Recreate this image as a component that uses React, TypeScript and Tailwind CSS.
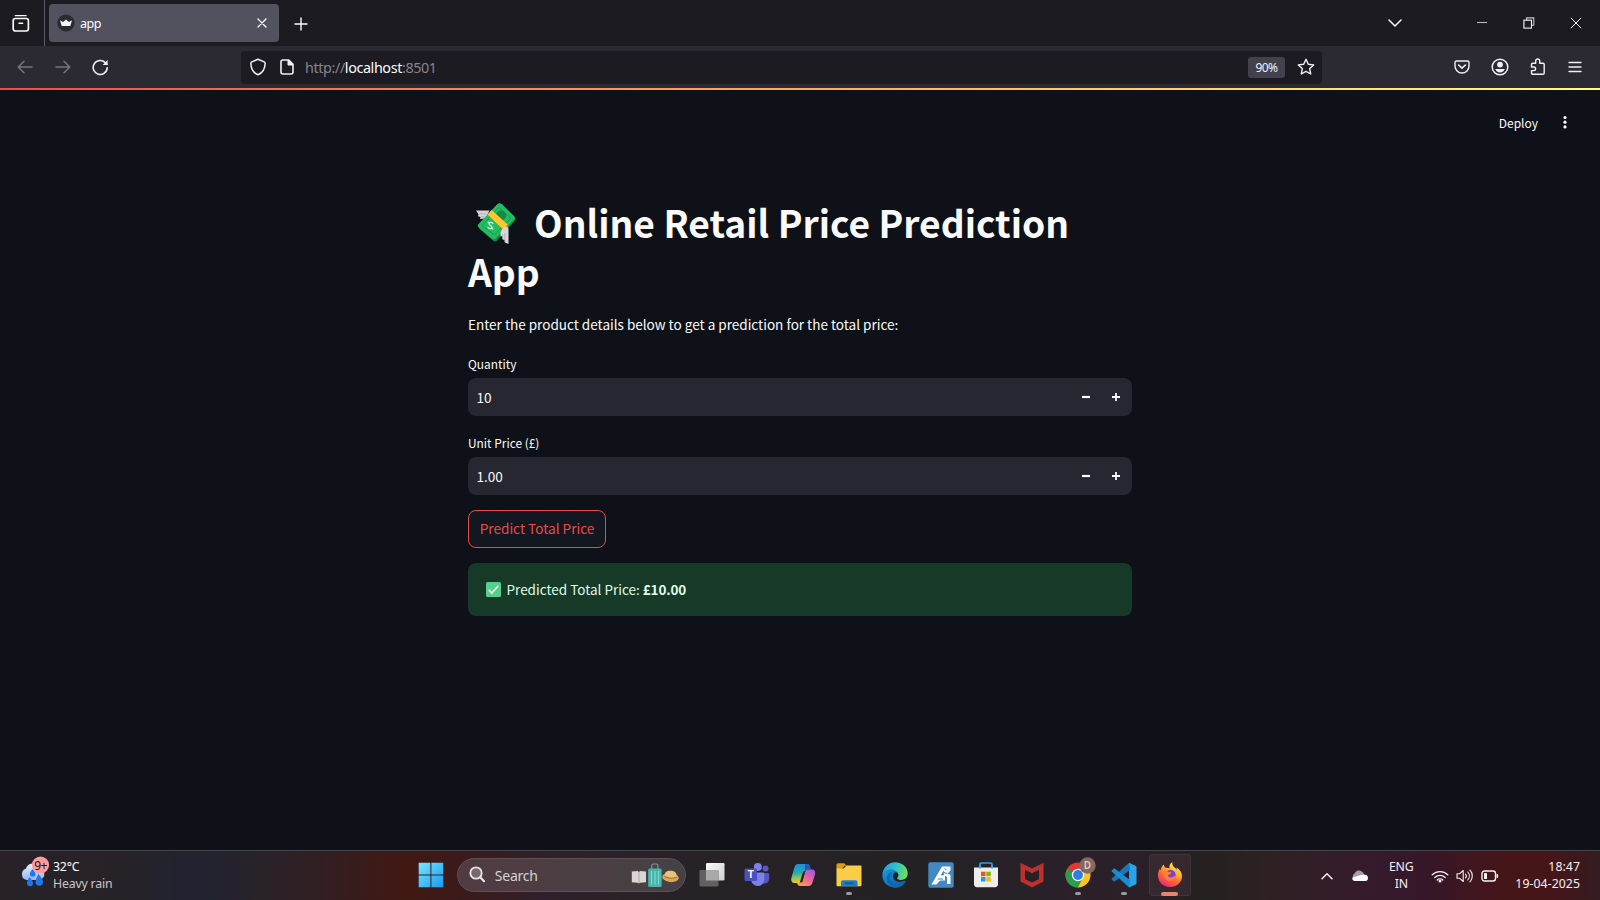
import React from "react";

type IconProps = { className?: string; children: React.ReactNode; w: number; h: number };

function Svg({ className, children, w, h }: IconProps) {
  return (
    <svg width={w} height={h} viewBox={`0 0 ${w} ${h}`} fill="none" className={`block shrink-0 ${className ?? ""}`}>
      {children}
    </svg>
  );
}

const line = { stroke: "currentColor", strokeWidth: 1.5, strokeLinecap: "round" as const, strokeLinejoin: "round" as const };

function TabBar() {
  return (
    <div className="flex h-[46px] items-start bg-[#1c1b22] text-[#fbfbfe]">
      <div className="flex h-[46px] w-[45px] items-center border-r border-[#5b5b66] pl-3">
        <Svg w={18} h={18}>
          <path d="M3.3 1.7h10.8" {...line} strokeWidth={1.3} />
          <rect x="1.2" y="4.5" width="15.2" height="12.5" rx="2.2" {...line} strokeWidth={1.7} />
          <path d="M7 9.2h3.6" {...line} />
        </Svg>
      </div>
      <div className="mt-1 ml-1 flex h-[38px] w-[230px] items-center rounded bg-[#52525e] pl-2 pr-3">
        <Svg w={18} h={18}>
          <circle cx="9" cy="9" r="8.6" fill="#2a2a33" />
          <path d="M3 6.3l3 1.7L9 5.4 12 8l3-1.7-1.7 5.7H4.7z" fill="#f4f4f4" />
        </Svg>
        <span className="ml-[5px] pt-px font-['Noto_Sans',sans-serif] text-[12.6px] leading-[18px] tracking-[-0.5px]">app</span>
        <Svg w={10} h={10} className="ml-auto">
          <path d="M1 1l8 8M9 1l-8 8" {...line} strokeWidth={1.3} />
        </Svg>
      </div>
      <Svg w={14} h={14} className="mt-[17px] ml-[15px]">
        <path d="M7 1v12M1 7h12" {...line} strokeWidth={1.4} />
      </Svg>
      <div className="ml-auto flex h-[46px] items-center pr-[18px]">
        <Svg w={14} h={8} className="mr-[74px]">
          <path d="M1 1l6 6 6-6" {...line} />
        </Svg>
        <Svg w={12} h={12} className="mr-[35px]">
          <path d="M1 5.5h10" stroke="#b9b9bd" strokeWidth="1.1" />
        </Svg>
        <Svg w={12} h={12} className="mr-[35px]">
          <path d="M3.6 3V.9h7.2v7.3H8.6" stroke="#c4c4c8" strokeWidth="1.1" />
          <rect x=".9" y="3.2" width="7.6" height="7.9" stroke="currentColor" strokeWidth="1.1" />
        </Svg>
        <Svg w={12} h={12}>
          <path d="M.8.8l10.4 10.4M11.2.8L.8 11.2" stroke="currentColor" strokeWidth="1" />
        </Svg>
      </div>
    </div>
  );
}

function Toolbar() {
  return (
    <div className="flex h-[42px] items-center bg-[#2b2a33] text-[#f0f0f4]">
      <Svg w={16} h={14} className="ml-[17px] text-[#76757e]">
        <path d="M15 7H1.5M7 1.2L1.2 7 7 12.8" {...line} />
      </Svg>
      <Svg w={16} h={14} className="ml-[21.5px] text-[#76757e]">
        <path d="M1 7h13.5M9 1.2L14.8 7 9 12.8" {...line} />
      </Svg>
      <Svg w={17} h={17} className="ml-[21.5px]">
        <path d="M15.2 8.7a7 7 0 1 1-2-5.1l1.6 1.7" {...line} strokeWidth={1.6} />
        <path d="M15.6 1v5h-5z" fill="currentColor" />
      </Svg>
      <div className="ml-[132px] flex h-[33px] w-[1081px] items-center rounded bg-[#1c1b22] pr-[7px] pl-[8.5px]">
        <Svg w={16} h={18}>
          <path d="M8 1.2l6.2 2.7c.7.3.9.8.9 1.4 0 5-2.3 9.5-7.1 11.500C3.2 14.8.9 10.3.9 5.3c0-.6.2-1.1.9-1.4z" {...line} />
        </Svg>
        <Svg w={14} h={16} className="ml-[14.5px]">
          <path d="M3 1h5.800L13 5.200V13a2 2 0 0 1-2 2H3a2 2 0 0 1-2-2V3a2 2 0 0 1 2-2z" {...line} strokeWidth={1.6} />
          <path d="M8 1v5h5z" fill="currentColor" stroke="currentColor" />
        </Svg>
        <span className="ml-[11px] pt-[2px] font-['Noto_Sans',sans-serif] text-[14.4px] leading-5 tracking-[-0.41px] text-[#85848c]">
          http://<span className="text-[#fbfbfe]">localhost</span>:8501
        </span>
        <span className="ml-auto flex h-[21px] w-[37px] items-center justify-center rounded-[3px] bg-[#42414d] pt-px font-['Noto_Sans',sans-serif] text-[12px] tracking-[-0.6px] text-[#f0f0f4]">
          90%
        </span>
        <Svg w={18} h={18} className="ml-3">
          <path d="M9 1.300l2.300 4.900 5.400.7-4 3.700 1 5.400L9 13.400 4.300 16l1-5.400-4-3.700 5.400-.7z" {...line} strokeWidth={1.4} />
        </Svg>
      </div>
      <div className="ml-auto flex items-center pr-[18px]">
        <Svg w={16} h={14} className="mr-[21px]">
          <path d="M2.500 1h11c.9 0 1.500.6 1.500 1.500V6A7 7 0 0 1 1 6V2.500C1 1.600 1.600 1 2.500 1z" {...line} strokeWidth={1.4} />
          <path d="M4.600 5L8 8.200 11.400 5" {...line} strokeWidth={1.6} />
        </Svg>
        <Svg w={18} h={18} className="mr-[21px]">
          <circle cx="9" cy="9" r="7.8" {...line} strokeWidth={1.5} />
          <circle cx="9" cy="6.6" r="2.9" fill="currentColor" />
          <path d="M4.300 11h9.400c-.7 2.200-2.400 3.600-4.700 3.600S5 13.200 4.300 11z" fill="currentColor" />
        </Svg>
        <Svg w={16} h={18} className="mr-[22px]">
          <path d="M1.500 6.500c0-.7.5-1.200 1.200-1.200h3V3a2 2 0 0 1 4 0v2.300H13c.7 0 1.200.5 1.200 1.200V15c0 .8-.5 1.300-1.200 1.300H2.700c-.7 0-1.200-.5-1.200-1.200v-2.500h2.300a1.800 1.800 0 0 0 0-3.600H1.500z" {...line} strokeWidth={1.4} />
        </Svg>
        <Svg w={14} h={12}>
          <path d="M1 1.500h12M1 6h12M1 10.500h12" {...line} strokeWidth={1.3} />
        </Svg>
      </div>
    </div>
  );
}

function MoneyWings() {
  return (
    <Svg w={40} h={42} className="mt-[23px] mr-[18px] ml-2">
      <path d="M0 7.500h13.500l-4 8-5.500.5.500-2-2.500-.7.500-2z" fill="#d6d2db" />
      <path d="M3.500 10.500l6 .5M5.500 13.500l3 .3" stroke="#a9a4b0" strokeWidth=".7" />
      <path d="M3 23L22.300 1.300a3 3 0 0 1 4 0L38.500 14a3 3 0 0 1 0 4L21 37.500a3 3 0 0 1-4 0L3.500 26z" fill="#168b46" />
      <path d="M2.800 20.800L21.500 1a3 3 0 0 1 3.800 0L38 13a2.500 2.500 0 0 1 0 3.500L19.500 35.500a3 3 0 0 1-3.800 0L2.800 24.500a2.500 2.500 0 0 1 0-3.700z" fill="#24bd62" />
      <path d="M6 22.800L22.800 4.300l12 10.700-16.300 17z" stroke="#179a4d" strokeWidth="1" />
      <ellipse cx="25" cy="12.500" rx="5.300" ry="5" fill="#168b46" />
      <path d="M11.500 11.500l4.200-4.500 15.800 14.500-4.300 5z" fill="#ffc72e" />
      <path d="M27.200 26.500l4.300-5v4l-3.500 4.500z" fill="#dd9a22" />
      <path d="M17.300 20.700c-1.300-1.600-3.100-1.700-4-.7-1.500 1.800 3.900 3.200 2.500 5-.9 1.100-2.900.7-4.200-.9M11.700 18.800l1.400 1.200M15.800 25l1.400 1.200" stroke="#d3fbe2" strokeWidth="1.200" />
      <path d="M24.500 30.500c.5-3.500 2.500-6 6-7l2 2v15.500l-3.700-1.500v-2.500l-2.300-.5v-3l-2-.5z" fill="#d9d5de" />
      <path d="M28.800 30v9M26.500 31v5" stroke="#aaa5b1" strokeWidth=".7" />
    </Svg>
  );
}

function NumberField({ label, value }: { label: string; value: string }) {
  return (
    <div className="flex flex-col">
      <label className="h-[23px] text-[11.9px] leading-[17px] text-[#fafafa]">{label}</label>
      <div className="flex h-[38px] items-center rounded-lg bg-[#262730] pr-[12px] pl-[8.5px]">
        <span className="grow text-[13.6px] leading-5">{value}</span>
        <Svg w={8} h={8} className="mr-[22px]">
          <path d="M0 4h8" stroke="currentColor" strokeWidth="2.2" />
        </Svg>
        <Svg w={8} h={8}>
          <path d="M0 4h8M4 0v8" stroke="currentColor" strokeWidth="1.8" />
        </Svg>
      </div>
    </div>
  );
}

function StreamlitPage() {
  return (
    <main className="flex h-[762px] flex-col bg-[#0e1117] font-['Noto_Sans_CJK_SC',sans-serif] text-[#fafafa]">
      <div className="h-[2px] shrink-0 bg-linear-to-r from-[#e5504f] to-[#fffd80]" />
      <header className="flex h-[66px] shrink-0 items-center justify-end pr-[33.5px]">
        <span className="text-[12px] leading-5">Deploy</span>
        <Svg w={4} h={14} className="mb-[3px] ml-[24.5px]">
          <circle cx="2" cy="2.5" r="1.6" fill="currentColor" />
          <circle cx="2" cy="7.2" r="1.6" fill="currentColor" />
          <circle cx="2" cy="11.9" r="1.6" fill="currentColor" />
        </Svg>
      </header>
      <section className="ml-[468px] flex w-[664px] flex-col pt-[24px]">
        <h1 className="text-[37.2px] leading-[49.5px] font-bold">
          <span className="flex h-[49px] items-start">
            <MoneyWings />
            <span className="mt-[18px]">Online Retail Price Prediction</span>
          </span>
          <span className="mt-[18px] block">App</span>
        </h1>
        <p className="mt-[15px] text-[13.56px] leading-6 tracking-[-0.01px]">Enter the product details below to get a prediction for the total price:</p>
        <div className="mt-[19px] flex flex-col gap-[18px]">
          <NumberField label="Quantity" value="10" />
          <NumberField label="Unit Price (£)" value="1.00" />
        </div>
        <button className="mt-[15px] h-[38px] w-[138px] rounded-lg border border-[#e84a4c] bg-[#131720] pb-px text-[13.6px] text-[#ed494b]">
          Predict Total Price
        </button>
        <div className="mt-[15px] flex h-[53px] items-center rounded-lg bg-[#173928] pl-[18px] text-[13.5px] text-[#dffde9]">
          <Svg w={15} h={15} className="mr-[5.5px]">
            <rect width="15" height="15" rx="1.5" fill="#55cf89" />
            <path d="M2.800 7.800l3 3.200 6.300-7" stroke="#effff4" strokeWidth="1.6" />
          </Svg>
          <span className="whitespace-pre">Predicted Total Price: <b className="font-bold tracking-[-0.15px]">£10.00</b></span>
        </div>
      </section>
    </main>
  );
}

function Slot({ children, running }: { children: React.ReactNode; running?: boolean }) {
  return (
    <div className="flex h-[49px] w-[45.8px] shrink-0 flex-col items-center pt-[11px]">
      {children}
      {running && <span className="mt-[4px] h-[3px] w-[6px] rounded-full bg-[#9c989c]" />}
    </div>
  );
}

function Weather() {
  return (
    <div className="flex h-[49px] w-[408px] items-start pt-[4px] pl-[20px]">
      <svg width="30" height="34" viewBox="0 0 30 34" className="block shrink-0">
        <defs>
          <linearGradient id="cloud" x1="0" y1="0" x2="0" y2="1">
            <stop stopColor="#e8f1ff" />
            <stop offset="1" stopColor="#8fb6f5" />
          </linearGradient>
        </defs>
        <path d="M6.500 25a6 6 0 0 1-.5-11.500 7 7 0 0 1 13-1 6.500 6.500 0 0 1 1 12.500z" fill="url(#cloud)" />
        <path d="M12.500 14c2 2.500 3 3.500 3 5a2.800 2.800 0 0 1-5.600 0c0-1.500.6-2.500 2.600-5zM9.500 22c2.500 3 3.500 4 3.500 6a3 3 0 0 1-6 .5c0-2 .5-3.500 2.500-6.500zM18.500 19c3 4 4.500 5.500 4.500 8.500a3.800 3.800 0 0 1-7.500 0c0-3 1-4.500 3-8.500z" fill="#2374f0" />
        <circle cx="20.500" cy="10" r="8.6" fill="#ff9a9c" />
        <text x="20.500" y="14.500" textAnchor="middle" fontFamily="Noto Sans, sans-serif" fontSize="12" letterSpacing="-.5" fill="#1d1214">9+</text>
      </svg>
      <div className="ml-[3px] pt-[3px] font-['Noto_Sans',sans-serif] text-[12.3px] leading-[17px] tracking-[-0.18px] text-white">
        <div>32°C</div>
        <div className="text-[#c9c6c9]">Heavy rain</div>
      </div>
    </div>
  );
}

function SearchBox() {
  return (
    <div className="mt-[7px] mr-[3px] ml-[3px] flex h-[34px] w-[229px] shrink-0 items-center rounded-full border border-[#5c5054] bg-linear-to-r from-[#513b42] to-[#454144] pr-[6px] pl-[11px]">
      <Svg w={17} h={17} className="-mt-px">
        <circle cx="7" cy="7" r="5.7" stroke="#e9e6e8" strokeWidth="1.8" fill="#756a70" />
        <path d="M11.500 11.500l3.500 3.700" stroke="#e9e6e8" strokeWidth="2.2" strokeLinecap="round" />
      </Svg>
      <span className="ml-[9px] font-['Noto_Sans',sans-serif] text-[14px] tracking-[-0.25px] text-[#d6d2d5]">Search</span>
      <Svg w={48} h={25} className="ml-auto">
        <path d="M.8 8.500l5.800-.5 1.300 1 1.300-1 5.800.5v10.800l-6 .5-1.200.8-1.200-.8-5.800-.5z" fill="#dad6d4" />
        <path d="M8 9v11" stroke="#a5a09e" strokeWidth=".8" />
        <path d="M20.800 6V2.500c0-.8.5-1.500 1.300-1.500h3.500c.8 0 1.300.7 1.300 1.500V6" stroke="#849496" strokeWidth="1.2" />
        <rect x="17.200" y="5.500" width="13.500" height="18.500" rx="1.5" fill="#46b5aa" />
        <path d="M20.500 8v13.500M24 8v13.500M27.500 8v13.500" stroke="#82d8ce" strokeWidth="1.2" />
        <ellipse cx="39.500" cy="14.500" rx="8.3" ry="4.6" transform="rotate(6 39.500 14.500)" fill="#d9a85a" />
        <path d="M33.500 12.500c.5-4 3-5.200 6.500-4.700 3.500-.3 5.500 2 6 5.500-2 3-10 3-12.500-.8z" fill="#e9c27a" />
        <path d="M33.300 12.500c3.500 2.500 9 2.800 12.800 1v1c-4 2-9 1.700-12.800-.7z" fill="#a8763a" />
      </Svg>
    </div>
  );
}

function AppIcons() {
  return (
    <>
      <Slot>
        <Svg w={26} h={26}>
          <defs>
            <linearGradient id="tv" x1="0" y1="0" x2="1" y2="1">
              <stop stopColor="#fafafa" />
              <stop offset="1" stopColor="#cfcfcf" />
            </linearGradient>
          </defs>
          <rect x="7" y="1" width="18.500" height="17.500" rx="1.2" fill="url(#tv)" />
          <rect x=".5" y="8" width="19" height="16.500" rx="1.2" fill="#626162" />
          <path d="M7 8h12.500v10.500H7z" fill="#a9a9a9" />
        </Svg>
      </Slot>
      <Slot>
        <Svg w={26} h={26}>
          <circle cx="21.500" cy="6.500" r="3" fill="#5659c6" />
          <path d="M17 11h6.500c1 0 1.700.8 1.700 1.800V17a5 5 0 0 1-8.200 3.500z" fill="#5257c2" />
          <circle cx="13.800" cy="5" r="4" fill="#7b83eb" />
          <path d="M8 10.500h11c.8 0 1.300.5 1.300 1.300V17c0 4-3 7-6.500 7S7 21 7 17v-5z" fill="#7b83eb" />
          <rect x=".5" y="6.500" width="12.500" height="12.500" rx="1.2" fill="#4b50bd" />
          <text x="6.800" y="16.300" textAnchor="middle" fontFamily="Liberation Sans, sans-serif" fontWeight="bold" fontSize="10" fill="#fff">T</text>
        </Svg>
      </Slot>
      <Slot>
        <Svg w={26} h={26}>
          <defs>
            <linearGradient id="cpA" x1="0" y1="0" x2=".1" y2="1">
              <stop stopColor="#2387dc" />
              <stop offset=".5" stopColor="#25aeb0" />
              <stop offset=".8" stopColor="#a1c944" />
              <stop offset="1" stopColor="#f5c52d" />
            </linearGradient>
            <linearGradient id="cpB" x1=".7" y1="0" x2=".2" y2="1">
              <stop stopColor="#a65be0" />
              <stop offset=".5" stopColor="#f0629b" />
              <stop offset="1" stopColor="#ff9d50" />
            </linearGradient>
          </defs>
          <path d="M8 2h9c2 0 2.500 1.300 3 3l.8 2.500h-3C16 7.500 15 9 14.500 11l-2 7c-.5 2-1.500 3-3.500 3H5c-3 0-4.500-2-3.500-5.500l2.700-9.500C5 3.500 6 2 8 2z" fill="url(#cpA)" />
          <path d="M19.500 7.500H22c2.500 0 3.800 2 3 5l-2.500 8c-.8 2.500-2 3.500-4 3.500H10c-2 0-2.500-1.500-3-3h2c2 0 3-1 3.500-3l2.200-7c.7-2.500 2-3.500 4.800-3.500z" fill="url(#cpB)" />
          <path d="M15 2h2c2 0 2.500 1.300 3 3l.8 2.500h-3c-1.500 0-2.300.8-3 2.500z" fill="#2458bb" />
          <path d="M15.300 9l-3 11.200h-2.500l3-9.700c.4-1 1.200-1.500 2.500-1.500z" fill="#272125" />
        </Svg>
      </Slot>
      <Slot running>
        <Svg w={26} h={26}>
          <path d="M.5 3c0-1 .7-1.700 1.700-1.700h6l2.500 2.500h-2L6 7H.5z" fill="#dc9d14" />
          <path d="M.5 6.500h7L10.500 3.500h14c.7 0 1 .4 1 1V23c0 .8-.5 1.300-1.300 1.300H1.800c-.8 0-1.300-.5-1.300-1.300z" fill="#fbcd46" />
          <path d="M5 24.300v-4c0-1.200.8-2 2-2h12.500c1.200 0 2 .8 2 2v4z" fill="#1f7dcc" />
          <path d="M9 20.300h8.500v2H9z" fill="#155a9c" />
        </Svg>
      </Slot>
      <Slot>
        <Svg w={26} h={26}>
          <defs>
            <linearGradient id="edA" x1="0" y1=".3" x2="1" y2=".5">
              <stop stopColor="#239be0" />
              <stop offset=".55" stopColor="#35c5c0" />
              <stop offset="1" stopColor="#72df55" />
            </linearGradient>
            <linearGradient id="edB" x1="0" y1="0" x2="1" y2="1">
              <stop stopColor="#1b9de2" />
              <stop offset="1" stopColor="#0a559e" />
            </linearGradient>
          </defs>
          <path d="M.6 11C2 5.500 7 3 12 5l3 5 1 9 8-.3C21.500 23 17.500 25.700 13 25.700 5.500 25.700-.8 19.500.6 11z" fill="url(#edB)" />
          <path d="M.6 11C2 4.500 7 .3 13 .3c7.500 0 12.700 5 12.700 11.200 0 4-3 6.500-6.300 6.500-2.400 0-4.400-.8-4.400-1.800 0-.8 1.400-1.200 1.400-3.200 0-3-3.400-5.500-7.400-5.500-3.500 0-6.500 1.200-8.400 3.500z" fill="url(#edA)" />
          <path d="M10.500 10.500c-3 1.500-3.500 5.500-1.500 8.500 2.500 3.500 8.500 4 14.800.8-2.500 4-6.500 5.900-10.800 5.900C8 24.500 4.500 20.500 4.800 16c.3-3.500 2.700-5.500 5.700-5.500z" fill="#1265ae" />
          <path d="M13 10.200c1.800 0 3.300 1.300 3.300 2.800 0 2-1.300 2.400-1.300 3.200 0 1 2 1.800 4.400 1.800 1.800 0 3.400-.6 4.600-1.700-2 3.200-5.500 4-8.500 3.200-4-1-6.500-6-2.500-9.300z" fill="#252125" />
        </Svg>
      </Slot>
      <Slot>
        <Svg w={26} h={26}>
          <rect x=".3" y=".3" width="25.400" height="25.400" rx="2" fill="#4289c1" />
          <path d="M3.500 22.500L14 4.500h8.500v4l-3 3 3 1.500V22h-3.500v-7l-2-1.500v5h-5l-3.500 4z" fill="#fff" />
          <path d="M12.800 13l3-4.500V13.500zM10 16.500h5v1H9.500z" fill="#397fb9" />
          <path d="M16.500 6.500l2 1.500M15.800 10.500l3.500 1" stroke="#397fb9" strokeWidth="1" />
        </Svg>
      </Slot>
      <Slot>
        <Svg w={26} h={26}>
          <path d="M7 6V2.300C7 1.500 7.500 1 8.300 1h9.400c.8 0 1.300.5 1.300 1.300V6" stroke="#25a7e0" strokeWidth="1.7" />
          <path d="M1 5.500h24v16.800c0 1.700-1.200 2.900-2.900 2.900H3.900c-1.700 0-2.900-1.200-2.900-2.900z" fill="#ededed" />
          <path d="M7 3v3.500M19 3v3.500" stroke="#25a7e0" strokeWidth="1.7" />
          <path d="M8 9.700h4.500v4.500H8z" fill="#f05022" />
          <path d="M13.300 9.700h4.500v4.500h-4.500z" fill="#7fba00" />
          <path d="M8 15h4.500v4.500H8z" fill="#12a3ee" />
          <path d="M13.300 15h4.500v4.500h-4.500z" fill="#ffb900" />
        </Svg>
      </Slot>
      <Slot>
        <Svg w={26} h={26}>
          <path d="M1.500.7L13 6.500 24.500.7v18.800L13 25.500 1.500 19.500zM6 7.700v9.300l7 3.500 7-3.500V7.700l-7 3.500z" fill="#bd302e" fillRule="evenodd" />
        </Svg>
      </Slot>
      <Slot running>
        <svg width="38" height="32" viewBox="0 0 38 32" className="-mt-[6px] block shrink-0">
          <circle cx="19" cy="19" r="12.500" fill="#dd3b31" />
          <path d="M19 19L8.200 12.700A12.500 12.500 0 0 0 19 31.500l6.200-12.500z" fill="#2a9c4b" />
          <path d="M19 31.500A12.500 12.500 0 0 0 29.800 12.800H19l6 6.200z" fill="#fac714" />
          <circle cx="19" cy="19" r="6.2" fill="#f5f7fb" />
          <circle cx="19" cy="19" r="4.9" fill="#2e7ce8" />
          <circle cx="28.500" cy="9.500" r="8.2" fill="#86685f" />
          <text x="28.500" y="13.300" textAnchor="middle" fontFamily="Noto Sans, sans-serif" fontSize="10" fontWeight="600" fill="#d9ccc7">D</text>
        </svg>
      </Slot>
      <Slot running>
        <Svg w={26} h={26}>
          <path d="M18 .7v24.800l6.500-3c.6-.3 1-.8 1-1.500V5.200c0-.7-.4-1.200-1-1.500z" fill="#29a4e8" />
          <path d="M18 .7L1 16.200c-.5.500-.5 1 0 1.500l1.500 1.500c.5.500 1 .5 1.500.1L19 8z" fill="#1379bb" />
          <path d="M18 25.500L1 9.800c-.5-.5-.5-1 0-1.500l1.500-1.500c.5-.5 1-.5 1.500-.1L19 18z" fill="#1b8bd2" />
        </Svg>
      </Slot>
      <div className="mt-[3px] ml-[2px] flex h-[42px] w-[42px] shrink-0 flex-col items-center rounded bg-[#35292f] pt-[8px] ring-1 ring-[#40343a] ring-inset">
        <Svg w={26} h={26}>
          <defs>
            <linearGradient id="ff" x1=".8" y1="0" x2=".25" y2="1">
              <stop stopColor="#fff04a" />
              <stop offset=".35" stopColor="#ffb62d" />
              <stop offset=".6" stopColor="#ff6a35" />
              <stop offset="1" stopColor="#ed2675" />
            </linearGradient>
          </defs>
          <path d="M15.500.3c-.5 2 .2 3.300 1.300 4.500 1.200 1 2.200 1.700 2.800 3 .2-1 .1-1.500-.1-2.300 3.500 2 5.500 5 5.500 8.800C25 20.500 19.800 25 13 25 6 25 1 20 1 13.500c0-3 .7-5.300 2-7 .1 1 .3 1.500.7 2 .1-2.800 1.400-4.800 3.300-6 0 1.500.5 2.500 1.500 3.300 1.500-.3 3-.1 4 .7-.7-2.700.5-5 3-6.200z" fill="url(#ff)" />
          <circle cx="13.500" cy="13" r="5.2" fill="#7644d8" />
          <path d="M5.500 9.500c2-1 4.200-.8 5.500.2 1.500.3 3 .3 3.500 1-1 1.800-3 1.800-3.500 2.500 0 2 2 3 4.500 2 2-.8 2.500-1.500 3.500-1-1.500 4-5 5.500-8 4.300-3-1.200-5.500-4-5.500-9z" fill="#ff7f33" />
        </Svg>
        <span className="mt-[4px] h-[4px] w-[17px] shrink-0 rounded-full bg-[#e98472]" />
      </div>
    </>
  );
}

function Tray() {
  return (
    <div className="ml-auto flex h-[49px] items-center pr-[20px] font-['Noto_Sans',sans-serif] text-[12.3px] leading-[16.5px] text-[#f5f1f3]">
      <Svg w={12} h={8} className="mr-[18px]">
        <path d="M1 6.800l5-5 5 5" {...line} />
      </Svg>
      <Svg w={18} h={12} className="mr-[18px]">
        <path d="M4 10A3.700 3.700 0 0 1 3.500 3.500 5 5 0 0 1 12 2.500l2 3z" fill="#a89ea8" />
        <path d="M3.500 11C1.500 10.500 1 9 1.500 7.500L10 5l4-.3a3.200 3.200 0 0 1 .5 6.300z" fill="#fff" />
      </Svg>
      <div className="mr-[16px] w-[28px] text-center tracking-[-0.1px]">
        <div>ENG</div>
        <div>IN</div>
      </div>
      <Svg w={18} h={14} className="mr-[7px]">
        <path d="M1.200 5.800a11 11 0 0 1 15.600 0M3.800 8.500a7.300 7.300 0 0 1 10.400 0M6.200 11a4 4 0 0 1 5.600 0" {...line} strokeWidth={1.3} />
        <circle cx="9" cy="12" r="1.5" fill="currentColor" />
      </Svg>
      <Svg w={18} h={14} className="mr-[7px]">
        <path d="M1 4.800h2.500L7.200 1.500v11L3.500 9.200H1z" {...line} strokeWidth={1.1} />
        <path d="M9.500 5a3 3 0 0 1 0 4M11.800 3a6 6 0 0 1 0 8M14 1.200a8.500 8.500 0 0 1 0 11.600" {...line} strokeWidth={1.1} />
      </Svg>
      <Svg w={18} h={12} className="mr-[16px]">
        <rect x="1" y="1" width="13.500" height="10" rx="2.5" {...line} strokeWidth={1.4} />
        <rect x="3" y="3" width="3" height="6" rx=".5" fill="currentColor" />
        <path d="M15.500 4h.8c.5 0 .8.3.8.8v2.400c0 .5-.3.8-.8.8h-.8z" fill="currentColor" />
      </Svg>
      <div className="text-right tracking-[0.05px]">
        <div>18:47</div>
        <div>19-04-2025</div>
      </div>
    </div>
  );
}

function Taskbar() {
  return (
    <footer className="flex h-[50px] items-start border-t border-[#48464b] bg-linear-[90deg,#282227_0%,#272229_8%,#202230_12%,#2a2228_17%,#341d1f_21%,#401914_25%,#3a1a1a_29%,#30202b_34%,#262226_43%,#242124_58%,#29212a_66%,#2c1f28_71%,#25211f_76%,#2d2122_79%,#341c2b_84%,#351729_89%,#451518_94%,#451519_97%,#321c20_100%]">
      <Weather />
      <Slot>
        <Svg w={26} h={26}>
          <defs>
            <linearGradient id="win" x1="0" y1="0" x2="26" y2="26" gradientUnits="userSpaceOnUse">
              <stop stopColor="#7be9fd" />
              <stop offset="1" stopColor="#1398f2" />
            </linearGradient>
          </defs>
          <path d="M.7.7h11.700v11.700H.7zM13.400.7h11.800v11.700H13.400zM.7 13.400h11.700v11.800H.7zM13.400 13.400h11.800v11.800H13.400z" fill="url(#win)" />
        </Svg>
      </Slot>
      <SearchBox />
      <AppIcons />
      <Tray />
    </footer>
  );
}

export default function App() {
  return (
    <div className="flex h-[900px] w-[1600px] flex-col overflow-hidden bg-[#0e1117]">
      <TabBar />
      <Toolbar />
      <StreamlitPage />
      <Taskbar />
    </div>
  );
}
